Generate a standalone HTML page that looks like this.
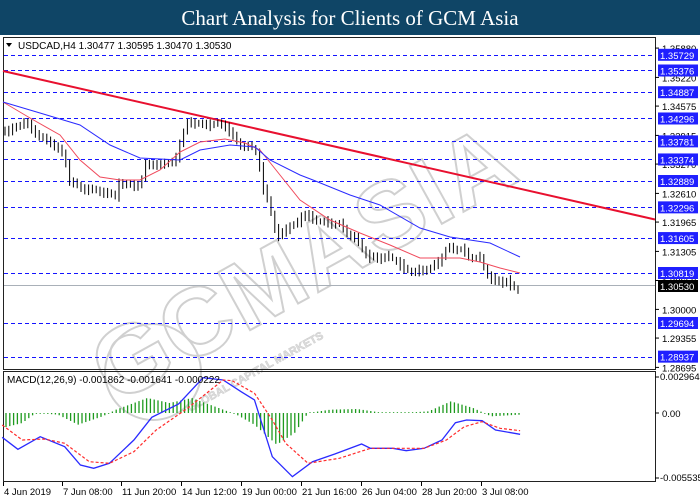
<!DOCTYPE html>
<html><head><meta charset="utf-8">
<style>
html,body{margin:0;padding:0;background:#fff;width:700px;height:500px;overflow:hidden}
#t{position:absolute;left:0;top:0;width:700px;height:35px;background:#0f4566;color:#fff;font-family:"Liberation Serif",serif;font-size:21px;text-align:center;line-height:36px;z-index:5}
svg{position:absolute;left:0;top:0;z-index:1}
</style></head><body>
<svg id="s" width="700" height="500" xmlns="http://www.w3.org/2000/svg" font-family="Liberation Sans, sans-serif">
<rect x="0" y="35" width="700" height="465" fill="#fff"/>
<g id="wm" fill="none" stroke="#d0d0d0" stroke-width="2">
 <text x="0" y="0" transform="translate(115,405) rotate(-29)" font-size="96" font-weight="bold" letter-spacing="2" fill="#fff">GCMASIA</text>
 <text x="0" y="0" transform="translate(190,412) rotate(-29)" font-size="11" font-weight="bold" stroke-width="0.6" fill="#ddd">GLOBAL CAPITAL MARKETS</text>
 <circle cx="153" cy="372" r="48" stroke-width="2"/>
</g>
<g id="g"></g>
<text x="18" y="49" font-size="10" fill="#000">USDCAD,H4  1.30477 1.30595 1.30470 1.30530</text>
<path d="M6 43 L12 43 L9 47 Z" fill="#000"/>
<text x="7" y="383" font-size="10" fill="#000">MACD(12,26,9) -0.001862 -0.001641 -0.000222</text>
</svg>
<div id="t">Chart Analysis for Clients of GCM Asia</div>
<script>
var g=document.getElementById('g'),h='';
function P(p){return 273+(1.30819-p)*4444;}
h+='<rect x="3.5" y="37.5" width="652" height="332" fill="none" stroke="#222"/>';
h+='<rect x="3.5" y="371.5" width="652" height="110" fill="none" stroke="#222"/>';
var lv=[1.35729,1.35376,1.34887,1.34296,1.33781,1.33374,1.32889,1.32296,1.31605,1.30819,1.29694,1.28937];
lv.forEach(function(p){var y=Math.round(P(p))+.5;h+='<line x1="4" x2="655" y1="'+y+'" y2="'+y+'" stroke="#1414ff" stroke-dasharray="4,3" shape-rendering="crispEdges"/>';});
h+='<line x1="4" x2="655" y1="285.5" y2="285.5" stroke="#a9b0b8"/>';
var tk=['1.35880','1.35220','1.34575','1.33915','1.33270','1.32610','1.31965','1.31305','1.30650','1.30000','1.29355','1.28695'];
tk.forEach(function(s){var y=P(+s);h+='<line x1="655" x2="659" y1="'+y+'" y2="'+y+'" stroke="#000"/><text x="662" y="'+(y+4)+'" font-size="9.5" fill="#000">'+s+'</text>';});
lv.forEach(function(p){var y=P(p);h+='<rect x="658" y="'+(y-6)+'" width="40" height="12" fill="#1f1fff"/><text x="660" y="'+(y+4)+'" font-size="9.5" fill="#fff">'+p.toFixed(5)+'</text>';});
h+='<rect x="658" y="280" width="40" height="12" fill="#000"/><text x="660" y="290" font-size="9.5" fill="#fff">1.30530</text>';
h+='<text x="660" y="380" font-size="9.5">0.002964</text><text x="662" y="417" font-size="9.5">0.00</text><text x="660" y="481" font-size="9.5">-0.005535</text>';
[377,413,478].forEach(function(y){h+='<line x1="655" x2="659" y1="'+y+'" y2="'+y+'" stroke="#000"/>';});
h+='<line x1="3" y1="71" x2="655" y2="219.5" stroke="#e8102f" stroke-width="2"/>';
function interp(pts,x){for(var i=1;i<pts.length;i++){if(x<=pts[i][0]){var a=pts[i-1],b=pts[i];return a[1]+(b[1]-a[1])*(x-a[0])/(b[0]-a[0]);}}return pts[pts.length-1][1];}
function poly(pts,st,extra){return '<polyline fill="none" stroke="'+st+'" '+(extra||'')+' points="'+pts.map(function(p){return p.join(',')}).join(' ')+'"/>';}
var price=[[3,130],[25,122],[40,140],[50,145],[65,160],[68,183],[80,190],[100,190],[115,193],[118,180],[140,183],[145,162],[160,165],[175,163],[182,140],[187,125],[200,128],[225,125],[230,133],[240,143],[253,145],[258,150],[262,183],[268,198],[273,218],[277,235],[290,225],[300,222],[303,214],[310,220],[320,225],[340,228],[345,233],[360,245],[370,258],[380,254],[395,255],[400,262],[405,267],[420,270],[430,268],[440,262],[443,257],[447,250],[460,253],[470,260],[480,262],[485,270],[490,280],[495,283],[505,278],[510,285],[520,286]];
var prev=130,x;
for(x=5;x<=521;x+=3.8){var c=interp(price,x)+Math.sin(x*1.7)*3.5;var o=prev+Math.cos(x*2.9)*2;var hi=Math.min(o,c)-2-Math.abs(Math.sin(x*3.1))*3,lo=Math.max(o,c)+2+Math.abs(Math.cos(x*2.3))*3;
 h+='<line x1="'+x+'" x2="'+x+'" y1="'+hi+'" y2="'+lo+'" stroke="#000"/>';
 var top=Math.min(o,c),bh=Math.max(1,Math.abs(c-o));
 h+='<rect x="'+(x-1.5)+'" y="'+top+'" width="3" height="'+bh+'" fill="'+(c<o?'#1fb87a':'#b0102a')+'" stroke="#000" stroke-width="0.6"/>';prev=c;}
h+=poly([[3,102],[30,118],[60,135],[80,160],[100,177],[120,180],[140,180],[160,170],[180,152],[200,142],[225,139],[245,143],[260,150],[280,175],[300,200],[330,220],[360,233],[390,245],[420,258],[460,258],[480,262],[500,268],[520,273]],'#f04a5c');
h+=poly([[3,102],[40,113],[80,125],[110,145],[140,158],[180,160],[200,150],[230,145],[255,147],[270,160],[300,175],[313,180],[350,195],[380,205],[420,228],[450,237],[490,243],[520,257]],'#2a2aff');
function M(p){return p.map(function(q){return [+(q[0]/2.24).toFixed(1),+(330+q[1]/3).toFixed(1)];});}
var hist=[[5,-45],[50,-30],[80,0],[130,-5],[175,-35],[230,-10],[260,10],[330,45],[380,30],[430,45],[480,20],[530,-5],[570,-35],[620,-95],[660,-60],[690,0],[740,10],[800,12],[850,2],[900,0],[960,5],[1010,35],[1060,15],[1100,-10],[1165,-5]];
for(x=6;x<=522;x+=3.8){var v=interp(hist,x*2.24)/3;h+='<line x1="'+x+'" x2="'+x+'" y1="413" y2="'+(413-(Math.abs(v)<0.8?0.8*(v<0?-1:1):v))+'" stroke="#1e9a1e" stroke-width="1.3"/>';}
h+=poly(M([[5,322],[40,358],[90,320],[145,350],[180,405],[210,415],[245,400],[300,330],[340,262],[400,222],[455,143],[500,150],[540,185],[570,210],[610,380],[655,440],[700,395],[750,372],[810,342],[830,355],[880,355],[910,362],[950,355],[990,330],[1020,278],[1045,270],[1080,272],[1110,300],[1165,313]]),'#2a2aff','stroke-width="1.3"');
h+=poly(M([[5,285],[50,330],[100,327],[145,340],[200,395],[245,400],[300,365],[350,300],[420,235],[500,150],[520,152],[570,190],[610,270],[640,340],[690,400],[760,385],[830,355],[900,355],[950,355],[1000,330],[1040,290],[1080,275],[1120,295],[1165,302]]),'#ff2a2a','stroke-dasharray="3,2" stroke-width="1.2"');
var d=[['4 Jun 2019',4],['7 Jun 08:00',63],['11 Jun 20:00',122],['14 Jun 12:00',182],['19 Jun 00:00',242],['21 Jun 16:00',302],['26 Jun 04:00',362],['28 Jun 20:00',422],['3 Jul 08:00',482]];
d.forEach(function(q){h+='<line x1="'+(q[1]-0.5)+'" x2="'+(q[1]-0.5)+'" y1="482" y2="486" stroke="#000"/><text x="'+q[1]+'" y="495" font-size="9.5">'+q[0]+'</text>';});
g.innerHTML=h;
</script>
</body></html>
